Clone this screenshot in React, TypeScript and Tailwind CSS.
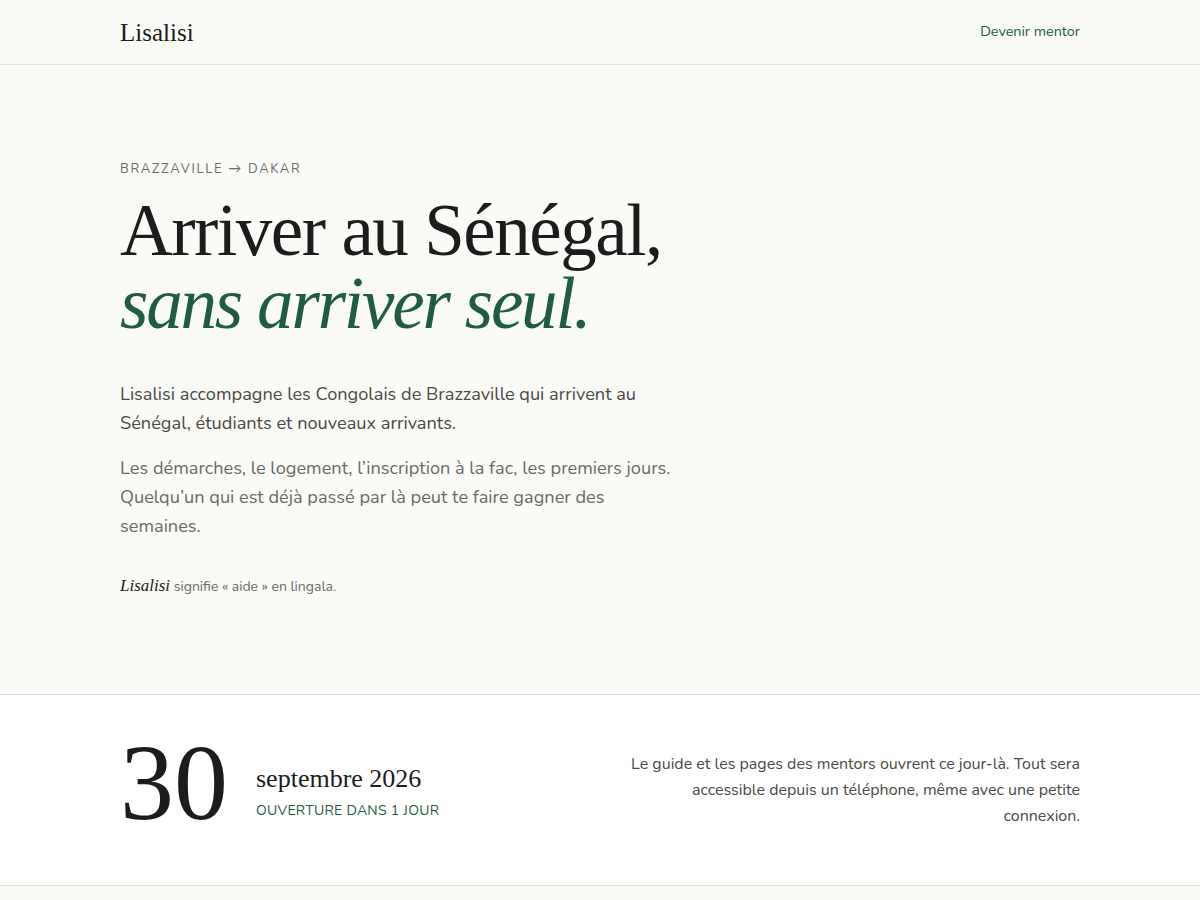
const serif = "font-['Liberation_Serif','DejaVu_Serif',serif]";
const sans = "font-['Nunito','Lato','Noto_Sans',sans-serif]";

function Header() {
    return (
        <header className="h-[65px] border-b border-[#e4e4df] bg-[#fafaf7]">
            <div className="mx-auto flex h-full max-w-[960px] items-center justify-between">
                <a className={`${serif} text-[25px] leading-none text-[#1c1c1c]`}>Lisalisi</a>
                <a className={`${sans} text-[14.4px] text-[#1f5c40]`}>Devenir mentor</a>
            </div>
        </header>
    );
}

function Hero() {
    return (
        <section className="border-b border-[#e0e0db] bg-[#fafaf7]">
            <div className="mx-auto max-w-[960px] pt-[95px] pb-[96px]">
                <p className={`${sans} text-[13px] uppercase tracking-[0.13em] text-[#6b6b66]`}>
                    Brazzaville → Dakar
                </p>
                <h1 className={`${serif} mt-[14px] whitespace-nowrap text-[73px] leading-[73px] tracking-[-0.02em] text-[#1c1c1c]`}>
                    Arriver au Sénégal,
                    <br />
                    <em className="tracking-[-0.03em] text-[#1f5c40]">sans arriver seul.</em>
                </h1>
                <div className="max-w-[565px]">
                    <p className={`${sans} mt-[40px] text-[18.2px] leading-[29px] text-[#4a4a46]`}>
                        Lisalisi accompagne les Congolais de Brazzaville qui arrivent au Sénégal, étudiants et nouveaux arrivants.
                    </p>
                    <p className={`${sans} mt-[16px] text-[18.2px] leading-[29px] text-[#6b6b66]`}>
                        Les démarches, le logement, l’inscription à la fac, les premiers jours. Quelqu’un qui est déjà passé par là peut te faire gagner des semaines.
                    </p>
                    <p className={`${sans} mt-[32px] text-[14px] text-[#6b6b66]`}>
                        <em className={`${serif} text-[17px] text-[#1c1c1c]`}>Lisalisi</em> signifie « aide » en lingala.
                    </p>
                </div>
            </div>
        </section>
    );
}

function Countdown() {
    return (
        <section className="border-b border-[#e0e0db] bg-white">
            <div className="mx-auto flex h-[190px] max-w-[960px] items-center justify-between">
                <div className="flex items-center gap-[28px]">
                    <span className={`${serif} pb-[14px] text-[108px] leading-none text-[#1c1c1c]`}>30</span>
                    <div className="pt-[4px]">
                        <div className={`${serif} text-[26px] leading-tight text-[#1c1c1c]`}>septembre 2026</div>
                        <div className={`${sans} mt-[4px] text-[14px] uppercase tracking-[0.02em] text-[#1f5c40]`}>
                            Ouverture dans 1 jour
                        </div>
                    </div>
                </div>
                <p className={`${sans} max-w-[460px] text-right text-[16px] leading-[26px] text-[#4a4a46]`}>
                    Le guide et les pages des mentors ouvrent ce jour-là. Tout sera accessible depuis un téléphone, même avec une petite connexion.
                </p>
            </div>
        </section>
    );
}

export default function App() {
    return (
        <div className="min-h-screen bg-[#fafaf7]">
            <Header />
            <Hero />
            <Countdown />
        </div>
    );
}
